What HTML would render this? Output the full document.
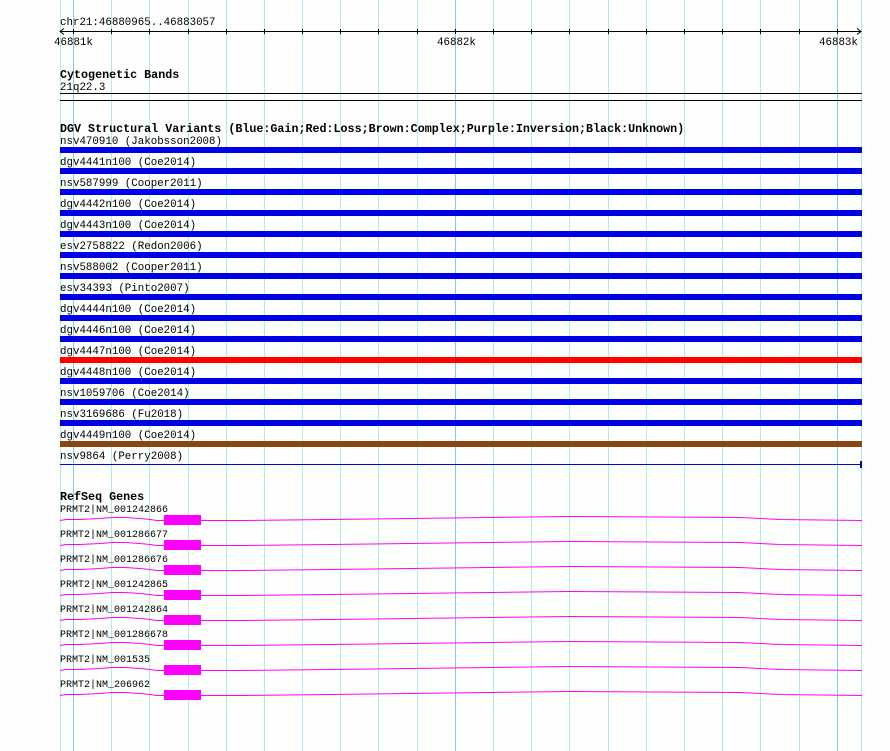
<!DOCTYPE html>
<html><head><meta charset="utf-8"><style>
html,body{margin:0;padding:0;background:#fcfffc;}
svg{display:block}
text{font-family:"Liberation Mono","DejaVu Sans Mono",monospace;font-size:10.8px;fill:#000}
.b{font-weight:bold;font-size:11.7px}
.g{font-size:10px}
</style></head><body>
<svg width="890" height="751" xmlns="http://www.w3.org/2000/svg">
<rect width="890" height="751" fill="#fcfffc"/>
<g stroke="#b0eaf0" stroke-width="1">
<line x1="60.5" y1="0" x2="60.5" y2="751"/>
<line x1="111.5" y1="0" x2="111.5" y2="751"/>
<line x1="149.5" y1="0" x2="149.5" y2="751"/>
<line x1="188.5" y1="0" x2="188.5" y2="751"/>
<line x1="226.5" y1="0" x2="226.5" y2="751"/>
<line x1="264.5" y1="0" x2="264.5" y2="751"/>
<line x1="302.5" y1="0" x2="302.5" y2="751"/>
<line x1="340.5" y1="0" x2="340.5" y2="751"/>
<line x1="378.5" y1="0" x2="378.5" y2="751"/>
<line x1="417.5" y1="0" x2="417.5" y2="751"/>
<line x1="493.5" y1="0" x2="493.5" y2="751"/>
<line x1="531.5" y1="0" x2="531.5" y2="751"/>
<line x1="569.5" y1="0" x2="569.5" y2="751"/>
<line x1="608.5" y1="0" x2="608.5" y2="751"/>
<line x1="646.5" y1="0" x2="646.5" y2="751"/>
<line x1="684.5" y1="0" x2="684.5" y2="751"/>
<line x1="722.5" y1="0" x2="722.5" y2="751"/>
<line x1="760.5" y1="0" x2="760.5" y2="751"/>
<line x1="799.5" y1="0" x2="799.5" y2="751"/>
<line x1="861.5" y1="0" x2="861.5" y2="751"/>
</g>
<g stroke="#80cce8" stroke-width="1">
<line x1="73.5" y1="0" x2="73.5" y2="751"/>
<line x1="455.5" y1="0" x2="455.5" y2="751"/>
<line x1="837.5" y1="0" x2="837.5" y2="751"/>
</g>
<text x="60" y="25">chr21:46880965..46883057</text>
<g stroke="#000" stroke-width="1" fill="none">
<line x1="60" y1="31.5" x2="861" y2="31.5"/>
<path d="M64 28.5 L60 31.5 L64 34.5"/>
<path d="M857 28.5 L861 31.5 L857 34.5"/>
</g>
<g stroke="#000">
<line x1="73.5" y1="29" x2="73.5" y2="34"/><line x1="111.5" y1="29" x2="111.5" y2="34"/><line x1="149.5" y1="29" x2="149.5" y2="34"/><line x1="188.5" y1="29" x2="188.5" y2="34"/><line x1="226.5" y1="29" x2="226.5" y2="34"/><line x1="264.5" y1="29" x2="264.5" y2="34"/><line x1="302.5" y1="29" x2="302.5" y2="34"/><line x1="340.5" y1="29" x2="340.5" y2="34"/><line x1="378.5" y1="29" x2="378.5" y2="34"/><line x1="417.5" y1="29" x2="417.5" y2="34"/><line x1="455.5" y1="29" x2="455.5" y2="34"/><line x1="493.5" y1="29" x2="493.5" y2="34"/><line x1="531.5" y1="29" x2="531.5" y2="34"/><line x1="569.5" y1="29" x2="569.5" y2="34"/><line x1="608.5" y1="29" x2="608.5" y2="34"/><line x1="646.5" y1="29" x2="646.5" y2="34"/><line x1="684.5" y1="29" x2="684.5" y2="34"/><line x1="722.5" y1="29" x2="722.5" y2="34"/><line x1="760.5" y1="29" x2="760.5" y2="34"/><line x1="799.5" y1="29" x2="799.5" y2="34"/><line x1="837.5" y1="29" x2="837.5" y2="34"/>
</g>
<text x="54" y="45">46881k</text>
<text x="437" y="45">46882k</text>
<text x="819" y="45">46883k</text>
<text x="60" y="78" class="b">Cytogenetic Bands</text>
<text x="60" y="90">21q22.3</text>
<rect x="60" y="93" width="802" height="1" fill="#000"/>
<rect x="60" y="100" width="802" height="1" fill="#000"/>
<text x="60" y="132" class="b">DGV Structural Variants (Blue:Gain;Red:Loss;Brown:Complex;Purple:Inversion;Black:Unknown)</text>
<text x="60" y="144">nsv470910 (Jakobsson2008)</text>
<text x="60" y="165">dgv4441n100 (Coe2014)</text>
<text x="60" y="186">nsv587999 (Cooper2011)</text>
<text x="60" y="207">dgv4442n100 (Coe2014)</text>
<text x="60" y="228">dgv4443n100 (Coe2014)</text>
<text x="60" y="249">esv2758822 (Redon2006)</text>
<text x="60" y="270">nsv588002 (Cooper2011)</text>
<text x="60" y="291">esv34393 (Pinto2007)</text>
<text x="60" y="312">dgv4444n100 (Coe2014)</text>
<text x="60" y="333">dgv4446n100 (Coe2014)</text>
<text x="60" y="354">dgv4447n100 (Coe2014)</text>
<text x="60" y="375">dgv4448n100 (Coe2014)</text>
<text x="60" y="396">nsv1059706 (Coe2014)</text>
<text x="60" y="417">nsv3169686 (Fu2018)</text>
<text x="60" y="438">dgv4449n100 (Coe2014)</text>
<text x="60" y="459">nsv9864 (Perry2008)</text>
<g fill="#0000e6">
<rect x="60" y="147" width="802" height="6"/>
<rect x="60" y="168" width="802" height="6"/>
<rect x="60" y="189" width="802" height="6"/>
<rect x="60" y="210" width="802" height="6"/>
<rect x="60" y="231" width="802" height="6"/>
<rect x="60" y="252" width="802" height="6"/>
<rect x="60" y="273" width="802" height="6"/>
<rect x="60" y="294" width="802" height="6"/>
<rect x="60" y="315" width="802" height="6"/>
<rect x="60" y="336" width="802" height="6"/>
<rect x="60" y="378" width="802" height="6"/>
<rect x="60" y="399" width="802" height="6"/>
<rect x="60" y="420" width="802" height="6"/>
<rect x="60" y="464" width="802" height="1"/>
<rect x="860" y="461" width="2" height="7"/>
</g>
<rect x="60" y="357" width="802" height="6" fill="#ff0000"/>
<rect x="60" y="441" width="802" height="6" fill="#8b4513"/>
<text x="60" y="500" class="b">RefSeq Genes</text>
<defs>
<g id="gene">
<polyline fill="none" stroke="#ff00ff" stroke-width="1" points="60,5.5 66,4.5 80,4.5 100,3.5 112,2.5 125,2.5 140,3.5 150,4.5 157,5.5 164,5.5 201,5.5 241,5.5 330,4.5 410,3.5 490,2.5 570,1.5 740,2.5 780,4.5 862,5.5"/>
<rect x="164" y="0" width="37" height="10" fill="#ff00ff"/>
</g>
</defs>
<text class="g" x="60" y="512">PRMT2|NM_001242866</text>
<use href="#gene" y="515"/>
<text class="g" x="60" y="537">PRMT2|NM_001286677</text>
<use href="#gene" y="540"/>
<text class="g" x="60" y="562">PRMT2|NM_001286676</text>
<use href="#gene" y="565"/>
<text class="g" x="60" y="587">PRMT2|NM_001242865</text>
<use href="#gene" y="590"/>
<text class="g" x="60" y="612">PRMT2|NM_001242864</text>
<use href="#gene" y="615"/>
<text class="g" x="60" y="637">PRMT2|NM_001286678</text>
<use href="#gene" y="640"/>
<text class="g" x="60" y="662">PRMT2|NM_001535</text>
<use href="#gene" y="665"/>
<text class="g" x="60" y="687">PRMT2|NM_206962</text>
<use href="#gene" y="690"/>
</svg>
</body></html>
